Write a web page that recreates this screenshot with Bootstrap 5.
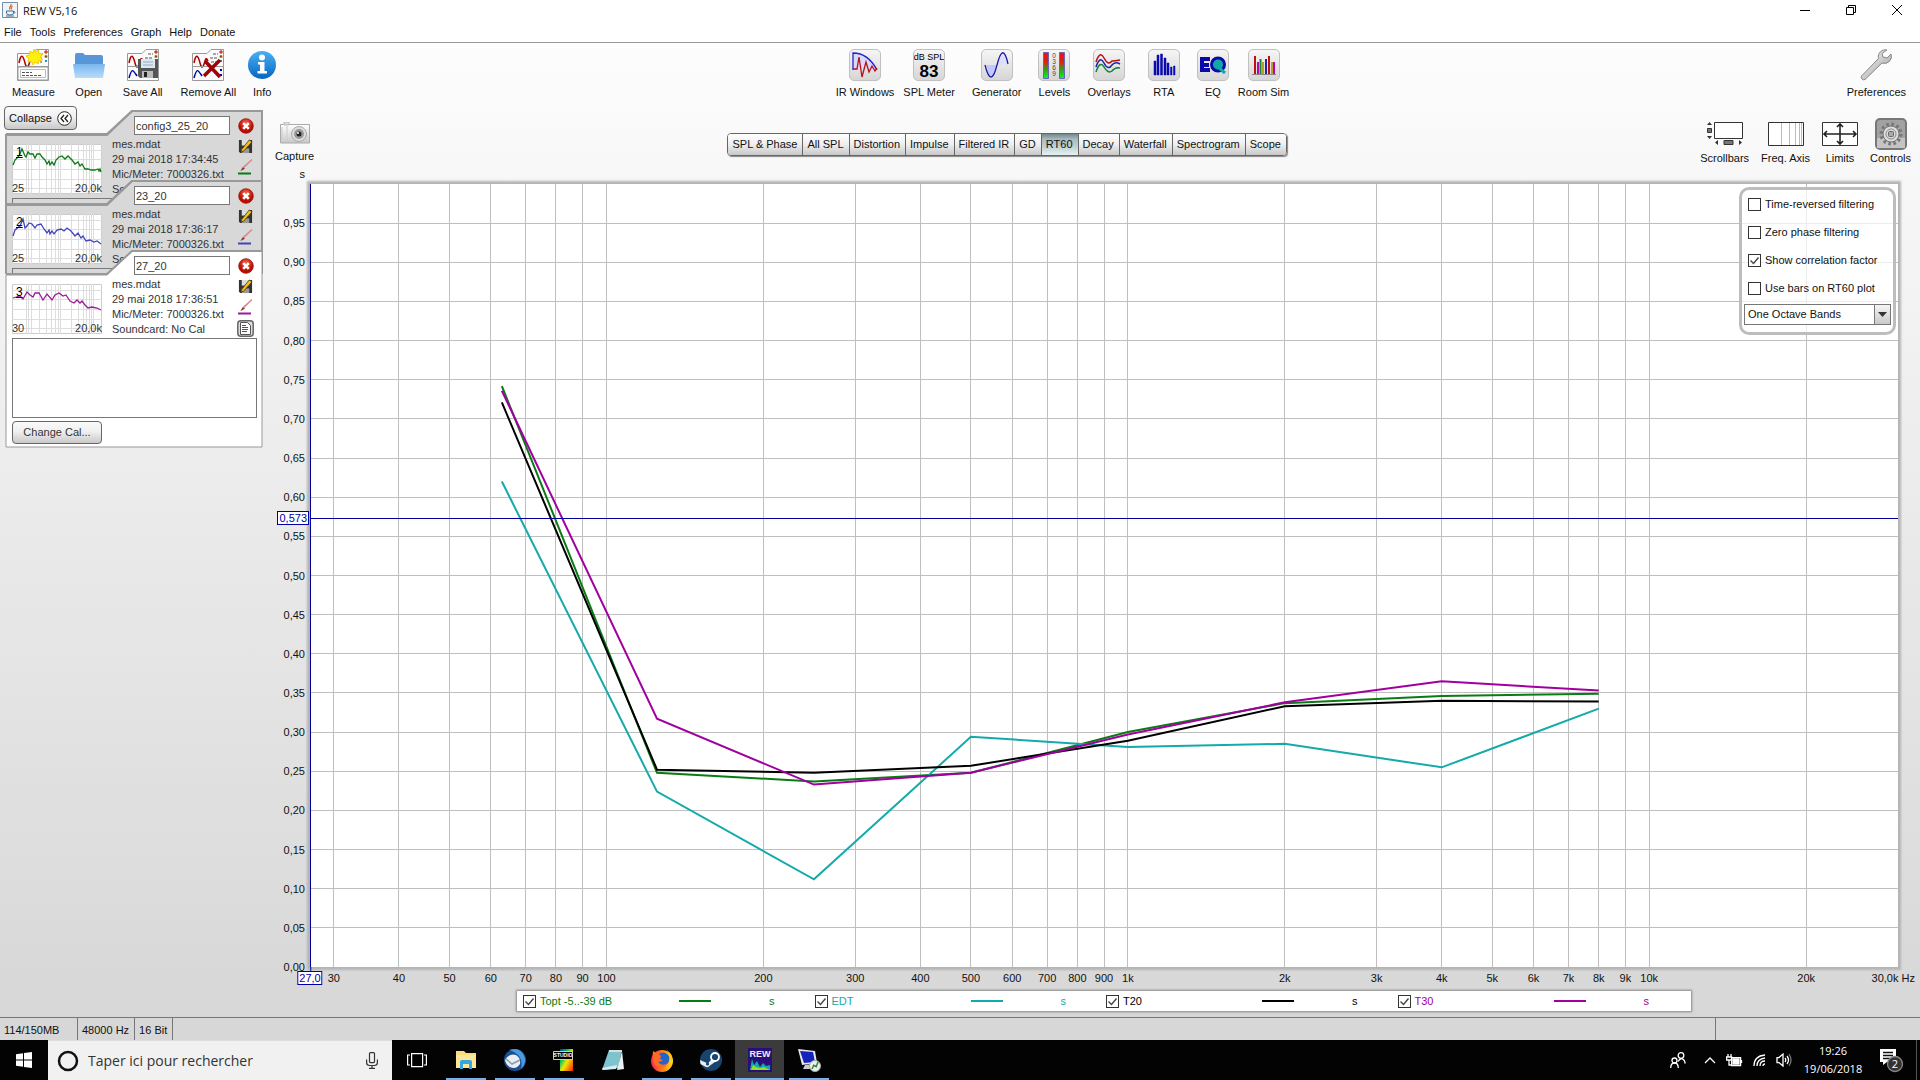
<!DOCTYPE html>
<html lang="fr">
<head>
<meta charset="utf-8">
<meta name="viewport" content="width=device-width, initial-scale=1">
<title>REW V5,16</title>
<link href="https://cdn.jsdelivr.net/npm/bootstrap@5.3.0/dist/css/bootstrap.min.css" rel="stylesheet">
<style>
body{font-family:"Liberation Sans",Arial,sans-serif;font-size:11px;line-height:15px;color:#111;background:#fff}
button,input,select,textarea{font:inherit;color:inherit}
svg{display:block;flex:none}
.title-bar{height:22px;padding:0 0 2px 2px;font-family:"Open Sans",sans-serif;font-size:11px}
.win-btn{border:0;background:none;padding:0;width:46px;height:20px;display:grid;place-items:center}
.menu-bar{height:21px;border-bottom:1px solid #999;padding-left:4px;gap:8px}
.menu-bar a,.tool{color:#111;text-decoration:none}
.workspace{background:linear-gradient(#fdfdfd,#f8f8f8 12%,#d7d7d7)}
.main-tools{padding:6px 14px 0 12px}
.tool{border:0;background:none;padding:0;display:flex;flex-direction:column;align-items:center;gap:4px;white-space:nowrap}
.tool-icon{width:32px;height:32px;border-radius:5px;border:1px solid #c0c0c0;background:linear-gradient(#f5f5f5,#d6d6d6)}
.tools-left{gap:18px}
.tools-mid{gap:17px}
.tool-near{margin-left:-8px}
.view-row{padding:18px 9px 0 0;height:84px}
.view-tool{gap:1px}
.view-icon{height:32px;display:grid;place-items:center}
.capture .view-icon{height:30px}
.side{width:275px;padding:6px 0 0 5px}
.soft-btn{border:1px solid #666;border-radius:4px;background:linear-gradient(#fafafa,#f0f0f0 45%,#c9c9c9);display:flex;align-items:center;justify-content:center;gap:5px}
.collapse-btn{width:73px;height:24px;position:relative;z-index:2;margin-left:-1px}
.deck{width:258px;margin-top:-20px}
.sheet{position:relative;height:94px;overflow:hidden;margin-bottom:-24px;padding:6px 6px 4px 7px;color:#333}
.sheet.front{height:auto;margin-bottom:0}
.sheet-bg{position:absolute;inset:0;width:100%;height:100%}
.sheet-in{position:relative}
.sheet-icons{width:17px;margin-right:3px;padding-top:2px;gap:5px}
.thumb-box{width:90px;height:50px;margin-top:28px;position:relative;background:#fff;line-height:12px}
.thumb-box svg{position:absolute;inset:0}
.thumb-box .trace-no{position:absolute;left:4px;top:2px;color:#000;text-decoration:underline;font-size:12px}
.name-box{width:96px;height:19px;border:1px solid #777;padding:0 1px;margin-right:7px;background:#fff;display:block}
.note-box{width:100%;height:80px;border:1px solid #777;margin-top:1px;background:transparent;resize:none;display:block}
.front .note-box{background:#fff}
.cal-btn{width:90px;height:23px;margin-top:3px}
.graph-tabs{border:1px solid #666;border-radius:4px;height:23px;margin-top:15px;overflow:hidden;box-shadow:1px 1px 1px #888}
.graph-tabs button{border:0;border-right:1px solid #666;padding:0 5px 0 4px;background:linear-gradient(#fff,#eee 50%,#c8c8c8)}
.graph-tabs button:last-child{border-right:0}
.graph-tabs button.on{background:linear-gradient(#71888c,#a9bbbe 25%,#c2d0d2 60%,#e6f2f2)}
.y-axis{width:35px;position:relative}
.y-axis span{position:absolute;right:5px;transform:translateY(-50%)}
.x-axis{height:24px;margin:0 22px 0 35px;position:relative}
.x-axis span{position:absolute;top:4px;transform:translateX(-50%);white-space:nowrap}
.y-axis .cursor-tag{right:1px;border:1px solid #00a;background:#fff;color:#00a;line-height:12px;padding:0 1px;z-index:2}
.x-axis .cursor-tag{border:1px solid #00a;background:#fff;color:#00a;line-height:12px;padding:0 1px;z-index:2}
.x-axis .cursor-tag::before{content:"";position:absolute;left:50%;bottom:100%;height:5px;border-left:1px solid #00a}
.plot{position:relative;background:#fff;margin-right:22px;box-shadow:0 0 2px 3px #b4b4b4,0 0 0 1px #999}
.plot>svg{position:absolute;inset:0;width:100%;height:100%}
.grid-line{stroke:#bfbfbf;stroke-width:1;vector-effect:non-scaling-stroke;shape-rendering:crispEdges}
.cursor-line{stroke:#009;stroke-width:1;vector-effect:non-scaling-stroke;shape-rendering:crispEdges}
.trace-line{fill:none;stroke-width:2;vector-effect:non-scaling-stroke}
.options{position:absolute;right:2px;top:3px;width:157px;border:3px solid #bdbdbd;border-radius:10px;background:rgba(255,255,255,.7);padding:0 2px 7px}
.options label{height:28px;gap:4px;padding-left:4px}
.tick{appearance:none;width:13px;height:13px;border:1px solid #333;background:#fff;margin:0;flex:none}
.tick:checked{background:#fff url("data:image/svg+xml,%3Csvg xmlns='http://www.w3.org/2000/svg' viewBox='0 0 11 11'%3E%3Cpath d='M1.500 5.500l3 3 5-6' fill='none' stroke='%23444' stroke-width='1.400'/%3E%3C/svg%3E")}
.band-wrap{position:relative;margin-top:2px}
.band-wrap select{appearance:none;width:100%;height:21px;border:1px solid #777;border-radius:0;background:#fff;padding:0 20px 0 3px;display:block}
.band-arrow{position:absolute;right:0;top:0;width:17px;height:21px;border:1px solid #777;background:linear-gradient(#f5f5f5,#c9c9c9);display:grid;place-items:center;pointer-events:none}
.legend-bar{width:1174px;max-width:100%;height:20px;background:#fff;box-shadow:0 0 2px 1px #888;padding:0 2px 0 6px;margin:0 0 6px 242px}
.legend-entry{flex:1 1 0;gap:4px}
.legend-entry .name{width:135px}
.legend-entry .swatch{width:32px;height:2px;background:currentColor}
.legend-entry .unit{margin-left:54px}
.status{height:23px;border-top:1px solid #777;background:#d7d7d7;line-height:24px}
.status span{border-right:1px solid #777;padding:0 5px 0 4px}
.status .mem{width:78px}
.status .rest{flex:1}
.status .tail{width:204px;border:0}
.task-bar{height:40px;background:#030303;color:#fff;font-family:"Open Sans",sans-serif}
.start{width:48px;border:0;background:none;display:grid;place-items:center}
.search{width:344px;background:#f1f1f1;padding:0 14px 0 9px;gap:9px;border-top:1px solid #ddd}
.search input{flex:1;min-width:0;border:0;background:none;font-size:14px;line-height:20px;padding:0;outline:0}
.search input::placeholder{color:#333;opacity:1}
.app-btn{width:49px;border:0;background:none;padding:0;display:grid;place-items:center;position:relative}
.app-btn.run::after{content:"";position:absolute;left:5px;right:4px;bottom:0;height:2px;background:#76b0e8}
.app-btn.on{background:#3b3b3b}
.app-btn.on::after{left:0;right:0}
.tray{gap:10px}
.tray svg{fill:none;stroke:#fff;stroke-width:1.3}
.clock{font-size:11px;line-height:18px;width:62px;text-align:center;white-space:nowrap}
.peek{border-left:1px solid #555;width:4px;margin-left:2px}
</style>
<script src="https://cdn.jsdelivr.net/npm/bootstrap@5.3.0/dist/js/bootstrap.bundle.min.js"></script>
</head>
<body>
<svg width="0" height="0" class="position-absolute" aria-hidden="true">
<defs>
<linearGradient id="gb" x2="0" y2="1"><stop stop-color="#7ab6ee"/><stop offset="1" stop-color="#b9dcfb"/></linearGradient>
<linearGradient id="gi" x2="0" y2="1"><stop stop-color="#4cb0f5"/><stop offset="1" stop-color="#0566c0"/></linearGradient>
<linearGradient id="gl" x2="0" y2="1"><stop stop-color="#f01010"/><stop offset=".35" stop-color="#e02010"/><stop offset=".65" stop-color="#3c9a10"/><stop offset="1" stop-color="#00ff20"/></linearGradient>
<linearGradient id="gm" x2="1" y2="1"><stop stop-color="#fff"/><stop offset="1" stop-color="#999"/></linearGradient>
<linearGradient id="gc" x2="0" y2="1"><stop stop-color="#fff"/><stop offset="1" stop-color="#c8c8c8"/></linearGradient>
<radialGradient id="gr" cy=".3"><stop stop-color="#f06a50"/><stop offset="1" stop-color="#b80d00"/></radialGradient>
<linearGradient id="gs" x2="1" y2="1"><stop stop-color="#003c9a"/><stop offset=".3" stop-color="#00c060"/><stop offset=".55" stop-color="#f4e800"/><stop offset="1" stop-color="#f02000"/></linearGradient>
<linearGradient id="gf" x2="1" y2="0"><stop stop-color="#ff2060"/><stop offset=".5" stop-color="#ff7a10"/><stop offset="1" stop-color="#ffe020"/></linearGradient>
<symbol id="doc-tabs" viewBox="0 0 32 32"><path d="M.5 4.500H15l4-4h12.500v31H.5z" fill="#fafafa" stroke="#999"/><path d="M2 14c2-10 4-8 6 0s4 2 5-2 2-2 3 0" fill="none" stroke="#b00000" stroke-width="1.500"/><path d="M18 9h7M19 13h6M21 5h5" stroke="#555" stroke-dasharray="3 1"/><path d="M1 17.500h30" stroke="#999"/><path d="M28 2h2v2h-2z" fill="none" stroke="#c00"/><path d="M28 6.500h2v2h-2z" fill="#222" stroke="#c80"/><path d="M28 11h2v2h-2z" fill="#19c"/></symbol>
<symbol id="red-x" viewBox="0 0 16 16"><circle cx="8" cy="8" r="7.300" fill="url(#gr)" stroke="#a01008" stroke-width=".8"/><path d="M5.200 5.200l5.600 5.600m0-5.600l-5.600 5.600" stroke="#fff" stroke-width="2.600"/></symbol>
<symbol id="disk-pen" viewBox="0 0 16 16"><path d="M1 1h14v14H2.500L1 13.500z" fill="#333"/><path d="M4 1h8v6H4z" fill="#ddd"/><path d="M4 10h8v5H4z" fill="#999"/><path d="M4 11L12 1l3 2-9 10-3 1z" fill="#f0c020" stroke="#3a2a00" stroke-width=".8"/></symbol>
<symbol id="pen-red" viewBox="0 0 16 14"><path d="M2 13l3-5 9-8 1 1-8 8z" fill="#d88"/><path d="M2 13l2.500-4 2.500 1.500z" fill="#833"/></symbol>
<symbol id="thumb-grid" viewBox="0 0 90 50"><path d="M.5.5h89v49H.5z" fill="#fff" stroke="#ccc"/><path d="M0 6.500h90M0 15.500h90M0 25.500h90M0 35.500h90M0 44.500h90M14.500 0v50M16.500 0v50M19.500 0v50M27.500 0v50M34.500 0v50M39.500 0v50M43.500 0v50M46.500 0v50M48.500 0v50M59.500 0v50M66.500 0v50M71.500 0v50M74.500 0v50M77.500 0v50M79.500 0v50M81.500 0v50" stroke="#ddd"/></symbol>
</defs>
</svg>

<div class="d-flex flex-column min-vh-100">
<header>
  <div class="title-bar d-flex align-items-center justify-content-between">
    <div class="d-flex align-items-center" style="gap:5px">
      <svg width="16" height="16" viewBox="0 0 16 16"><path d="M.5.5h15v15H.5z" fill="#eef4fa" stroke="#6f8fae"/><path d="M9 2c1 2-3 3-1 5.500M10.500 4c-2 1-1 2-1 3.500" fill="none" stroke="#e06a20" stroke-width="1.300"/><path d="M4.500 9h7v2q0 2-3.500 2t-3.500-2zm7 .5c2-.3 2 1.500 0 2M4 14h8" fill="none" stroke="#456b94"/></svg>
      <span>REW V5,16</span>
    </div>
    <div class="d-flex">
      <button class="win-btn" aria-label="Réduire"><svg width="10" height="10" stroke="#000"><path d="M0 5.500h10"/></svg></button>
      <button class="win-btn" aria-label="Restaurer"><svg width="10" height="10" fill="none" stroke="#000"><path d="M.5 2.500h7v7h-7zM2.500 2V.5h7v7H8"/></svg></button>
      <button class="win-btn" aria-label="Fermer"><svg width="10" height="10" stroke="#000"><path d="M0 0l10 10M10 0L0 10"/></svg></button>
    </div>
  </div>
  <nav class="menu-bar d-flex align-items-center">
    <a href="#">File</a><a href="#">Tools</a><a href="#">Preferences</a><a href="#">Graph</a><a href="#">Help</a><a href="#">Donate</a>
  </nav>
</header>

<div class="workspace flex-grow-1 d-flex flex-column">
  <div class="main-tools d-flex justify-content-between">
    <div class="d-flex tools-left">
      <button class="tool"><svg width="32" height="32"><use href="#doc-tabs"/><path d="M1 18h30v13H1z" fill="#fff" stroke="#999"/><path d="M3.500 20.500h25v8h-25z" fill="none" stroke="#bbb"/><path d="M5 23.500h10M5 26.500h20" stroke="#555" stroke-dasharray="3 1"/><path d="M17 0l1.500 3 3-2 .5 3.500 3.500.5-2 3 2 3-3.500.5L21 15l-3-2-2 3-1.500-3.500L11 13l.5-3.500L9 7l3.500-1L13 2l3 2z" fill="#ffee10" stroke="#f0d000"/></svg>Measure</button>
      <button class="tool"><svg width="32" height="32"><path d="M2 6q0-2 2-2h6l2 2h16q2 0 2 2v20H2z" fill="#5796d8"/><path d="M0 15h32l-2 14H2z" fill="url(#gb)"/></svg>Open</button>
      <button class="tool"><svg width="32" height="32"><use href="#doc-tabs"/><path d="M2 29c3-11 4-8 8-2" fill="none" stroke="#00a" stroke-width="1.500"/><path d="M11 10h20v19H13l-2-2z" fill="#555"/><path d="M14 10h14v9H14z" fill="#dbe8f4"/><path d="M16 13h10M16 16h10" stroke="#9ab"/><path d="M15 22h11v7H15z" fill="#bbb"/><path d="M17 23h3v5h-3z" fill="#222"/></svg>Save All</button>
      <button class="tool"><svg width="32" height="32"><use href="#doc-tabs"/><path d="M2 29c3-11 4-8 8-2" fill="none" stroke="#00a" stroke-width="1.500"/><path d="M28 20h2v2h-2zM28 25h2v2h-2z" fill="#00a"/><path d="M13 12l15 16M28 11L12 27" stroke="#a00008" stroke-width="3.500"/></svg>Remove All</button>
      <button class="tool tool-near"><svg width="32" height="32"><circle cx="16" cy="16" r="14" fill="url(#gi)"/><circle cx="16" cy="8.500" r="3" fill="#fff"/><path d="M12 13h6.500v9H21v2.500h-9.500V22H14v-6.500h-2z" fill="#fff"/></svg>Info</button>
    </div>
    <div class="d-flex tools-mid">
      <button class="tool"><svg class="tool-icon" viewBox="0 0 30 30"><path d="M3 20V3q15 0 24 17" fill="#dadaff" stroke="#22c" stroke-width="1.300"/><path d="M3 19h4l2-12 3 20 4-15 3 10 3-6 3 5 2-3" fill="none" stroke="#b11" stroke-width="1.300"/></svg>IR Windows</button>
      <button class="tool tool-near"><svg class="tool-icon" viewBox="0 0 30 30"><text x="15" y="10" text-anchor="middle" font-size="9">dB SPL</text><text x="15" y="27" text-anchor="middle" font-size="17" font-weight="700">83</text></svg>SPL Meter</button>
      <button class="tool"><svg class="tool-icon" viewBox="0 0 30 30"><path d="M4 15q5 24 11 0z" fill="#c5c5ff"/><path d="M15 15Q21-8 26 14z" fill="#dedeff"/><path d="M3 15q6 24 12 0t11-1" fill="none" stroke="#1a1aa0" stroke-width="1.300"/></svg>Generator</button>
      <button class="tool"><svg class="tool-icon" viewBox="0 0 30 30"><path d="M4.500 2.500h5v26h-5zM20.500 2.500h5v26h-5z" fill="url(#gl)" stroke="#66b"/><g font-size="6.500" text-anchor="middle" fill="#444"><text x="15" y="8">0</text><text x="15" y="14">3</text><text x="15" y="20">6</text><text x="15" y="26">9</text></g></svg>Levels</button>
      <button class="tool"><svg class="tool-icon" viewBox="0 0 30 30"><g fill="none" stroke-width="1.500"><path d="M2 12Q6 0 10 8t8 3q3 0 8-1" stroke="#b11"/><path d="M2 17Q6 5 10 13t8 2q3-4 8-1" stroke="#22a"/><path d="M2 22Q6 10 10 17t8 4q3-4 8-3" stroke="#183"/></g></svg>Overlays</button>
      <button class="tool"><svg class="tool-icon" viewBox="0 0 30 30"><path d="M5 25V11h2v14zM8 25V5h2v20zM11.500 25V4h2v21zM15 25V8h2v17zM18 25V13h2v12zM21.500 25v-8h1.500v8zM24.500 25v-9h1.500v9z" fill="#0a0ab0" stroke="#0a0ab0" stroke-width=".5"/></svg>RTA</button>
      <button class="tool"><svg class="tool-icon" viewBox="0 0 30 30"><path d="M2 7h10v4H6v2h5v4H6v1h6v4H2z" fill="#0a0aa8"/><circle cx="20" cy="14.500" r="6" fill="none" stroke="#0a0aa8" stroke-width="4"/><circle cx="20" cy="14.500" r="5" fill="#12a8a8"/><path d="M20 17l7 6" stroke="#12a8a8" stroke-width="3"/></svg>EQ</button>
      <button class="tool tool-near"><svg class="tool-icon" viewBox="0 0 30 30"><path d="M3 24.500h24" stroke="#888"/><g stroke-width="2"><path d="M6 24V6M20 24V6" stroke="#b11"/><path d="M9 24V12M25 24V12" stroke="#b0b"/><path d="M11.500 24V9" stroke="#183"/><path d="M14 24V12M23 24V12" stroke="#b8a020"/><path d="M17 24V9" stroke="#22a"/></g></svg>Room Sim</button>
    </div>
    <button class="tool"><svg width="32" height="32" viewBox="0 0 32 32"><path d="M27 1a7 7 0 0 0-8.500 8.500L1.500 27a2.600 2.600 0 0 0 3.500 3.500L22 14a7 7 0 0 0 9-9l-4 4-4-1-1-3.500z" fill="url(#gm)" stroke="#888"/></svg>Preferences</button>
  </div>

  <div class="d-flex flex-grow-1">
    <aside class="side flex-shrink-0">
      <button class="soft-btn collapse-btn">Collapse <svg width="15" height="15" fill="none" stroke="#222"><circle cx="7.500" cy="7.500" r="6.800" fill="#fff"/><path d="M7 4L4 7.500 7 11M11 4L8 7.500 11 11" stroke-width="1.300"/></svg></button>
      <div class="deck" id="deck"></div>
    </aside>

    <main class="flex-grow-1 d-flex flex-column" style="min-width:0">
      <div class="view-row d-flex justify-content-between align-items-start">
        <button class="tool view-tool capture"><span class="view-icon"><svg width="30" height="22"><path d="M.5 2.500h29v18.500H.5z" fill="url(#gc)" stroke="#aaa"/><path d="M4 0h5v3H4z" fill="#ddd" stroke="#bbb"/><path d="M2 5v13M7 4v16" stroke="#ccc"/><circle cx="19" cy="12" r="7.500" fill="#ddd" stroke="#aaa"/><circle cx="19" cy="12" r="5" fill="#999"/><circle cx="19" cy="12" r="2.500" fill="#222"/><circle cx="18" cy="11" r="1" fill="#fff"/></svg></span>Capture</button>
        <div class="graph-tabs d-flex" role="tablist">
          <button role="tab">SPL &amp; Phase</button><button role="tab">All SPL</button><button role="tab">Distortion</button><button role="tab">Impulse</button><button role="tab">Filtered IR</button><button role="tab">GD</button><button role="tab" class="on" aria-selected="true">RT60</button><button role="tab">Decay</button><button role="tab">Waterfall</button><button role="tab">Spectrogram</button><button role="tab">Scope</button>
        </div>
        <div class="d-flex" style="gap:12px">
          <button class="tool view-tool"><span class="view-icon"><svg width="36" height="24"><path d="M7.500.5h28v16h-28z" fill="#fff" stroke="#333"/><path d="M.5 6.500h4v4h-4zM17 18.500h9v4h-9z" fill="#777" stroke="#333"/><path d="M0 3l2.500-3L5 3zM0 14l2.500 3L5 14zM11 18v5l-3-2.500zM32 18v5l3-2.500z" fill="#333"/></svg></span>Scrollbars</button>
          <button class="tool view-tool"><span class="view-icon"><svg width="36" height="24"><path d="M.5.5h35v23H.5z" fill="#fff" stroke="#333"/><path d="M13.500 1v22M21.500 1v22M27.500 1v22M31.500 1v22M33.500 1v22" stroke="#bbb"/></svg></span>Freq. Axis</button>
          <button class="tool view-tool"><span class="view-icon"><svg width="36" height="24"><path d="M.5.5h35v23H.5z" fill="#fff" stroke="#333"/><path d="M2 12h32M18 2v20M5 9l-3 3 3 3M31 9l3 3-3 3M15 5l3-3 3 3M15 19l3 3 3-3" fill="none" stroke="#222" stroke-width="1.600"/></svg></span>Limits</button>
          <button class="tool view-tool"><svg width="32" height="32"><rect x="1" y="1" width="30" height="30" rx="4" fill="#a2a2a2" stroke="#777" stroke-width="2"/><path d="M2 20h28v10H2z" fill="#c4c4c4"/><circle cx="16" cy="16" r="9.500" fill="none" stroke="#777" stroke-width="4" stroke-dasharray="2.500 2.480"/><circle cx="16" cy="16" r="8" fill="#ddd" stroke="#777"/><circle cx="16" cy="16" r="5" fill="none" stroke="#888"/><rect x="13.500" y="13.500" width="5" height="5" rx="1" fill="#aaa" stroke="#666"/></svg>Controls</button>
        </div>
      </div>

      <div class="d-flex flex-grow-1">
        <div class="y-axis flex-shrink-0" id="yAxis"></div>
        <div class="plot flex-grow-1">
          <svg id="plotArea" viewBox="0 0 1588 783" preserveAspectRatio="none"></svg>
          <div class="options">
            <label class="d-flex align-items-center"><input class="tick" type="checkbox">Time-reversed filtering</label>
            <label class="d-flex align-items-center"><input class="tick" type="checkbox">Zero phase filtering</label>
            <label class="d-flex align-items-center"><input class="tick" type="checkbox" checked>Show correlation factor</label>
            <label class="d-flex align-items-center"><input class="tick" type="checkbox">Use bars on RT60 plot</label>
            <div class="band-wrap"><select aria-label="Bands"><option>One Octave Bands</option></select><span class="band-arrow"><svg width="9" height="5"><path d="M0 0h9L4.500 5z" fill="#333"/></svg></span></div>
          </div>
        </div>
      </div>
      <div class="x-axis" id="xAxis"></div>
      <div class="legend-bar d-flex align-items-stretch" id="legend"></div>
    </main>
  </div>
</div>

<footer>
  <div class="status d-flex"><span class="mem">114/150MB</span><span>48000 Hz</span><span>16 Bit</span><span class="rest"></span><span class="tail"></span></div>
  <div class="task-bar d-flex">
    <button class="start" aria-label="Démarrer"><svg width="16" height="16" fill="#fff"><path d="M0 2.300l7-1v6.200H0zM8 1.100L16 0v7.500H8zM0 8.500h7v6.200l-7-1zM8 8.500h8V16l-8-1.100z"/></svg></button>
    <div class="search d-flex align-items-center text-dark">
      <svg width="22" height="22"><circle cx="11" cy="11" r="9" fill="none" stroke="#111" stroke-width="2.500"/></svg>
      <input type="text" placeholder="Taper ici pour rechercher" aria-label="Taper ici pour rechercher">
      <svg width="12" height="17" fill="none" stroke="#333" stroke-width="1.200"><rect x="3.500" y=".6" width="5" height="10" rx="1"/><path d="M.6 7.500v3q0 3 3 3h4.800q3 0 3-3v-3M6 13.500V16M3 16.400h6"/></svg>
    </div>
    <button class="app-btn" aria-label="Vues"><svg width="20" height="16" fill="none" stroke="#fff" stroke-width="1.200"><path d="M4.600 1.600h11v13h-11zM3 3H.6v10H3M17 3h2.400v10H17"/></svg></button>
    <button class="app-btn run" aria-label="Explorateur"><svg width="22" height="20"><path d="M1 1h8l2 2h10v15H1z" fill="#f9dc7c"/><path d="M1 5h20v13H1z" fill="#fde69a"/><path d="M5 19v-7q0-2 2-2h8q2 0 2 2v7h-3v-5H8v5z" fill="#35a7dd"/></svg></button>
    <button class="app-btn run" aria-label="Thunderbird"><svg width="24" height="24"><circle cx="12" cy="12" r="11" fill="#1c4f90"/><path d="M6 2q12-4 16 8 1 6-4 11 2-8-2-13-5-5-10-6z" fill="#4a9be0"/><path d="M2 12q4-7 11-5 5 3 4 9-4 6-10 3-4-2-5-7z" fill="#e9eef4"/><path d="M3 11l6 5 8-4" fill="none" stroke="#8a9bb0" stroke-width="1.500"/></svg></button>
    <button class="app-btn run" aria-label="Studio"><svg width="22" height="24"><path d="M7 1h13v22H7z" fill="url(#gs)"/><path d="M.5 3.500h19v8H.5z" fill="#000" stroke="#ccc"/><text x="10" y="9" fill="#fff" font-size="5" font-weight="700" text-anchor="middle" font-family="Liberation Sans">STUDIO</text></svg></button>
    <button class="app-btn" aria-label="Bloc-notes"><svg width="24" height="24"><path d="M8 2h13l-4 18-16 2z" fill="#7fc3cf"/><path d="M8 2h13v2H8z" fill="#ddd"/><path d="M21 3l2 18-7 1z" fill="#e8f2f4"/><path d="M1 20l15-3-1 4-13 1z" fill="#d2eef2"/></svg></button>
    <button class="app-btn run" aria-label="Firefox"><svg width="24" height="24"><circle cx="12" cy="13" r="11" fill="url(#gf)"/><circle cx="13" cy="11" r="6.500" fill="#2464c8"/><path d="M3 3q3 2 5 2l3 3-1 3 3 1q-2 2-5 2 4 5 10 1-3 6-10 4T3 3z" fill="#ff6a20"/><path d="M16 1q5 5 3 13 5-3 2-8z" fill="#ffc414"/></svg></button>
    <button class="app-btn run" aria-label="Steam"><svg width="24" height="24"><circle cx="12" cy="12" r="11" fill="#17456f"/><path d="M1 12l8 3.500 4-5 5 2-7 5q-2 3-5 1L1.500 16z" fill="#eee"/><circle cx="16" cy="9" r="4" fill="#17456f" stroke="#fff" stroke-width="1.800"/><circle cx="8.500" cy="16" r="1.600" fill="#17456f"/></svg></button>
    <button class="app-btn run on" aria-label="REW"><svg width="24" height="24"><path d="M0 0h24v24H0z" fill="#2b0f78"/><text x="12" y="9" fill="#eee" font-size="9" font-weight="700" text-anchor="middle" font-family="Liberation Sans">REW</text><path d="M2 22l2-11 2 6 3-4 3 6 3-4 3 3 4-1v5z" fill="#1aa"/><path d="M3 22l2-5 3 2 4 1 4-1 6 3z" fill="#9d2"/></svg></button>
    <button class="app-btn run" aria-label="Moniteur"><svg width="24" height="24"><path d="M1 1l17 2 2 12-15 2z" fill="#e4e8ee"/><path d="M3 3l13 1 2 10-11 1z" fill="#1424b8"/><path d="M8 17l9-1 1 5H6z" fill="#ccc"/><circle cx="18" cy="18" r="5.500" fill="#eee" stroke="#aaa"/><path d="M15 21l2-4M19 19l2-5M16 17l4 2" stroke="#2a8a3a" stroke-width="1.500"/></svg></button>
    <div class="tray d-flex align-items-center ms-auto">
      <svg width="16" height="17"><circle cx="4.500" cy="8.500" r="2.500"/><circle cx="11" cy="3.500" r="2.800"/><path d="M.7 16q0-5 3.800-5t3.800 5M8 9.500q3-5 6.300-1l1 3"/></svg>
      <svg class="ms-2" width="12" height="8"><path d="M1 7l5-5 5 5"/></svg>
      <svg width="17" height="13"><path d="M5.600 3.600h9v8h-9z"/><path d="M7 5h6v5H7z" fill="#fff"/><path d="M15.500 6v3M2 0v3M5 0v3M.6 3h5v3h-5zM3 6v5h3"/></svg>
      <svg width="13" height="13"><path d="M1 12Q1 2 12 1M4 12q0-7 8-8M7 12q0-5 5-5M10 12q0-2 2-2"/></svg>
      <svg width="16" height="14"><path d="M1 4.600h2l4-3.500v12L3 9.600H1zM9 5q1.500 2 0 4M11 3q3 4 0 8"/><path d="M13 1q4 6 0 12" stroke="#777"/></svg>
      <div class="clock">19:26<br>19/06/2018</div>
      <svg class="ms-1" width="26" height="26" aria-label="2 notifications"><path d="M2 2h16v13H9l-4 3v-3H2z" fill="#fff" stroke="none"/><path d="M5 5.500h10M5 8.500h10M5 11.500h7" stroke="#111"/><circle cx="17" cy="17" r="7.500" fill="#333" stroke="#888"/><text x="17" y="21" fill="#fff" stroke="none" font-size="11" text-anchor="middle">2</text></svg>
      <div class="peek align-self-stretch"></div>
    </div>
  </div>
</footer>
</div>

<script>
const sheets = [
  {no:1, name:"config3_25_20", time:"29 mai 2018 17:34:45", low:"25", color:"#0a7a14",
   pts:"1,21 3,16 7,12 10,5 13,12 14,13 16,8 18,10 21,10 23,14 25,10 28,10 30,13 33,16 35,20 37,17 38,21 40,18 42,21 44,16 47,13 50,12 53,15 56,12 60,16 63,20 66,18 68,22 70,20 73,25 76,25 79,26 83,26 86,25 87,27 88,25 89,28"},
  {no:2, name:"23_20", time:"29 mai 2018 17:36:17", low:"25", color:"#4343bb",
   pts:"1,22 3,16 8,12 11,5 13,14 15,12 17,9 20,10 23,14 25,11 29,10 32,15 35,19 37,16 38,20 40,17 42,20 45,16 49,15 52,17 55,14 59,17 63,22 66,19 69,24 71,22 74,27 78,26 82,28 85,27 89,30"},
  {no:3, name:"27_20", time:"29 mai 2018 17:36:51", low:"30", color:"#9a1a9a",
   pts:"1,14 8,12 11,15 15,8 18,11 21,13 23,9 27,9 31,16 35,10 40,16 43,11 47,9 51,12 54,11 58,17 62,19 65,16 68,19 70,17 73,21 76,24 80,23 85,24 89,26"}
];
document.getElementById("deck").innerHTML = sheets.map(s => {
  const front = s.no === 3, h = front ? 198 : 130, bg = front ? "#fff" : "#d8d8d8";
  return `<section class="sheet${front ? " front" : ""}">
  <svg class="sheet-bg" viewBox="0 0 258 ${front ? 198 : 94}" preserveAspectRatio="none"><path d="M1 ${h-1}V25H102L127 1H257V${h-1}Z" fill="${bg}" stroke="#999" stroke-width="${front ? 1 : 2}"/><path d="M1 24H102L127 1H257" fill="none" stroke="#999" stroke-width="2"/></svg>
  <div class="sheet-in">
    <div class="d-flex">
      <div class="thumb-box d-flex justify-content-between align-items-end flex-shrink-0">
        <svg width="90" height="50"><use href="#thumb-grid"/><polyline points="${s.pts}" fill="none" stroke="${s.color}" stroke-width="1.300"/></svg>
        <span class="trace-no">${s.no}</span><span class="position-relative">${s.low}</span><span class="position-relative">20,0k</span>
      </div>
      <div class="flex-grow-1 text-nowrap" style="padding-left:10px">
        <input class="name-box ms-auto" value="${s.name}" aria-label="Measurement ${s.no} name">
        <div style="padding-top:2px">mes.mdat<br>${s.time}<br>Mic/Meter: 7000326.txt<br>Soundcard: No Cal</div>
      </div>
      <div class="sheet-icons d-flex flex-column align-items-center flex-shrink-0">
        <svg width="16" height="16"><use href="#red-x"/></svg>
        <svg width="15" height="15"><use href="#disk-pen"/></svg>
        <svg width="16" height="16"><use href="#pen-red" height="13"/><path d="M0 14.500h13" stroke="${s.color}" stroke-width="2"/></svg>
        <svg width="17" height="17" fill="none" stroke="#555"><rect x=".8" y=".8" width="15.400" height="15.400" rx="3" fill="#ddd" stroke="#666" stroke-width="1.500"/><path d="M3.500 2.500h7l3 3v9h-10z" fill="#fff"/><path d="M5 5.500h4M5 7.500h6M5 9.500h6M5 11.500h5"/></svg>
      </div>
    </div>
    ${front ? `<textarea class="note-box" aria-label="Notes"></textarea><button class="soft-btn cal-btn">Change Cal...</button>` : `<div class="note-box"></div>`}
  </div></section>`;
}).join("");

const F0 = 27, F1 = 30000, W = 1588, H = 783;
const fx = f => Math.log(f / F0) / Math.log(F1 / F0);
const fmt = v => v.toFixed(2).replace(".", ",");
const freqs = [30,40,50,60,70,80,90,100,200,300,400,500,600,700,800,900,1000,2000,3000,4000,5000,6000,7000,8000,9000,10000,20000];
const unlabelled = [];
const bands = [63,125,250,500,1000,2000,4000,8000];
const traces = [
  {name:"Topt -5..-39 dB", color:"#0a7a14", v:[.742,.248,.237,.248,.300,.337,.346,.349]},
  {name:"EDT", color:"#14aaaa", v:[.620,.224,.112,.294,.281,.285,.255,.330]},
  {name:"T20", color:"#000", v:[.721,.252,.248,.257,.289,.333,.340,.339]},
  {name:"T30", color:"#a000a0", v:[.736,.317,.233,.248,.297,.338,.365,.353]}
];
let g = "", ya = "", xa = "";
for (const f of freqs) {
  const x = fx(f);
  g += `<line class="grid-line" x1="${x*W}" x2="${x*W}" y1="0" y2="${H}"/>`;
  xa += `<span style="left:${x*100}%">${f < 1000 ? f : f/1000 + "k"}</span>`;
}
for (let i = 0; i < 20; i++) {
  const v = i * .05;
  if (i) g += `<line class="grid-line" x1="0" x2="${W}" y1="${(1-v)*H}" y2="${(1-v)*H}"/>`;
  ya += `<span style="top:${(1-v)*100}%">${fmt(v)}</span>`;
}
for (const t of traces)
  g += `<polyline class="trace-line" stroke="${t.color}" points="${t.v.map((v,i) => fx(bands[i])*W + "," + (1-v)*H).join(" ")}"/>`;
g += `<line class="cursor-line" x1="0" x2="${W}" y1="${(1-.573)*H}" y2="${(1-.573)*H}"/><line class="cursor-line" x1=".5" x2=".5" y1="0" y2="${H}"/>`;
document.getElementById("plotArea").innerHTML = g;
document.getElementById("yAxis").innerHTML = `<span style="top:-10px">s</span>` + ya + `<span class="cursor-tag" style="top:42.7%">0,573</span>`;
document.getElementById("xAxis").innerHTML = xa + `<span class="cursor-tag" style="left:0">27,0</span><span style="left:99.7%">30,0k Hz</span>`;
document.getElementById("legend").innerHTML = traces.map(t =>
  `<label class="legend-entry d-flex align-items-center" style="color:${t.color}"><input class="tick" type="checkbox" checked><span class="name">${t.name}</span><span class="swatch"></span><span class="unit">s</span></label>`).join("");
</script>
</body>
</html>
